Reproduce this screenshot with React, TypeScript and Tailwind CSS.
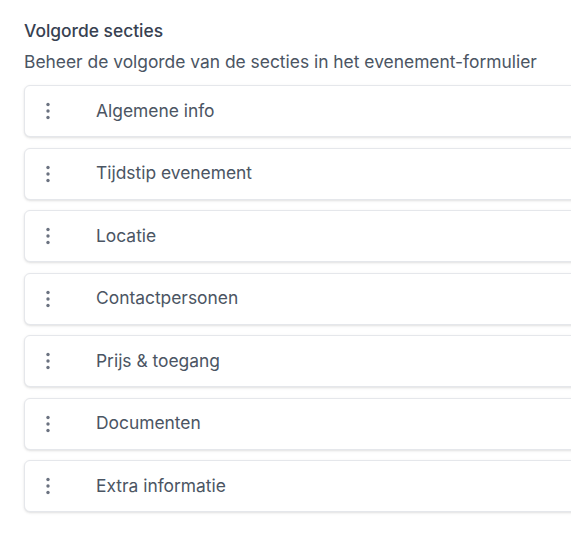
import React from 'react';

const sections = [
  'Algemene info',
  'Tijdstip evenement',
  'Locatie',
  'Contactpersonen',
  'Prijs & toegang',
  'Documenten',
  'Extra informatie',
];

function DragDots() {
  return (
    <svg width="8" height="20" viewBox="0 0 8 20" className="text-[#6b7280]">
      <circle cx="4" cy="3.5" r="1.7" fill="currentColor" />
      <circle cx="4" cy="10" r="1.7" fill="currentColor" />
      <circle cx="4" cy="16.5" r="1.7" fill="currentColor" />
    </svg>
  );
}

export default function App() {
  return (
    <div className="w-[571px] h-[540px] overflow-hidden bg-white font-['Inter',sans-serif]">
      <div className="pl-6 pt-[20px] w-[620px]">
        <h2 className="text-[17.4px] font-medium text-[#374151] leading-[22px]">Volgorde secties</h2>
        <p className="mt-[9px] text-[17.4px] text-[#4b5563] leading-[22px]">
          Beheer de volgorde van de secties in het evenement-formulier
        </p>
        <ul className="mt-[12px] flex flex-col gap-[10.5px]">
          {sections.map((s) => (
            <li
              key={s}
              className="h-[52px] flex items-center bg-white border border-[#e5e7eb] rounded-md shadow-sm"
            >
              <div className="w-[71px] pl-[19px] flex items-center">
                <DragDots />
              </div>
              <span className="text-[17.4px] text-[#4b5563]">{s}</span>
            </li>
          ))}
        </ul>
      </div>
    </div>
  );
}
